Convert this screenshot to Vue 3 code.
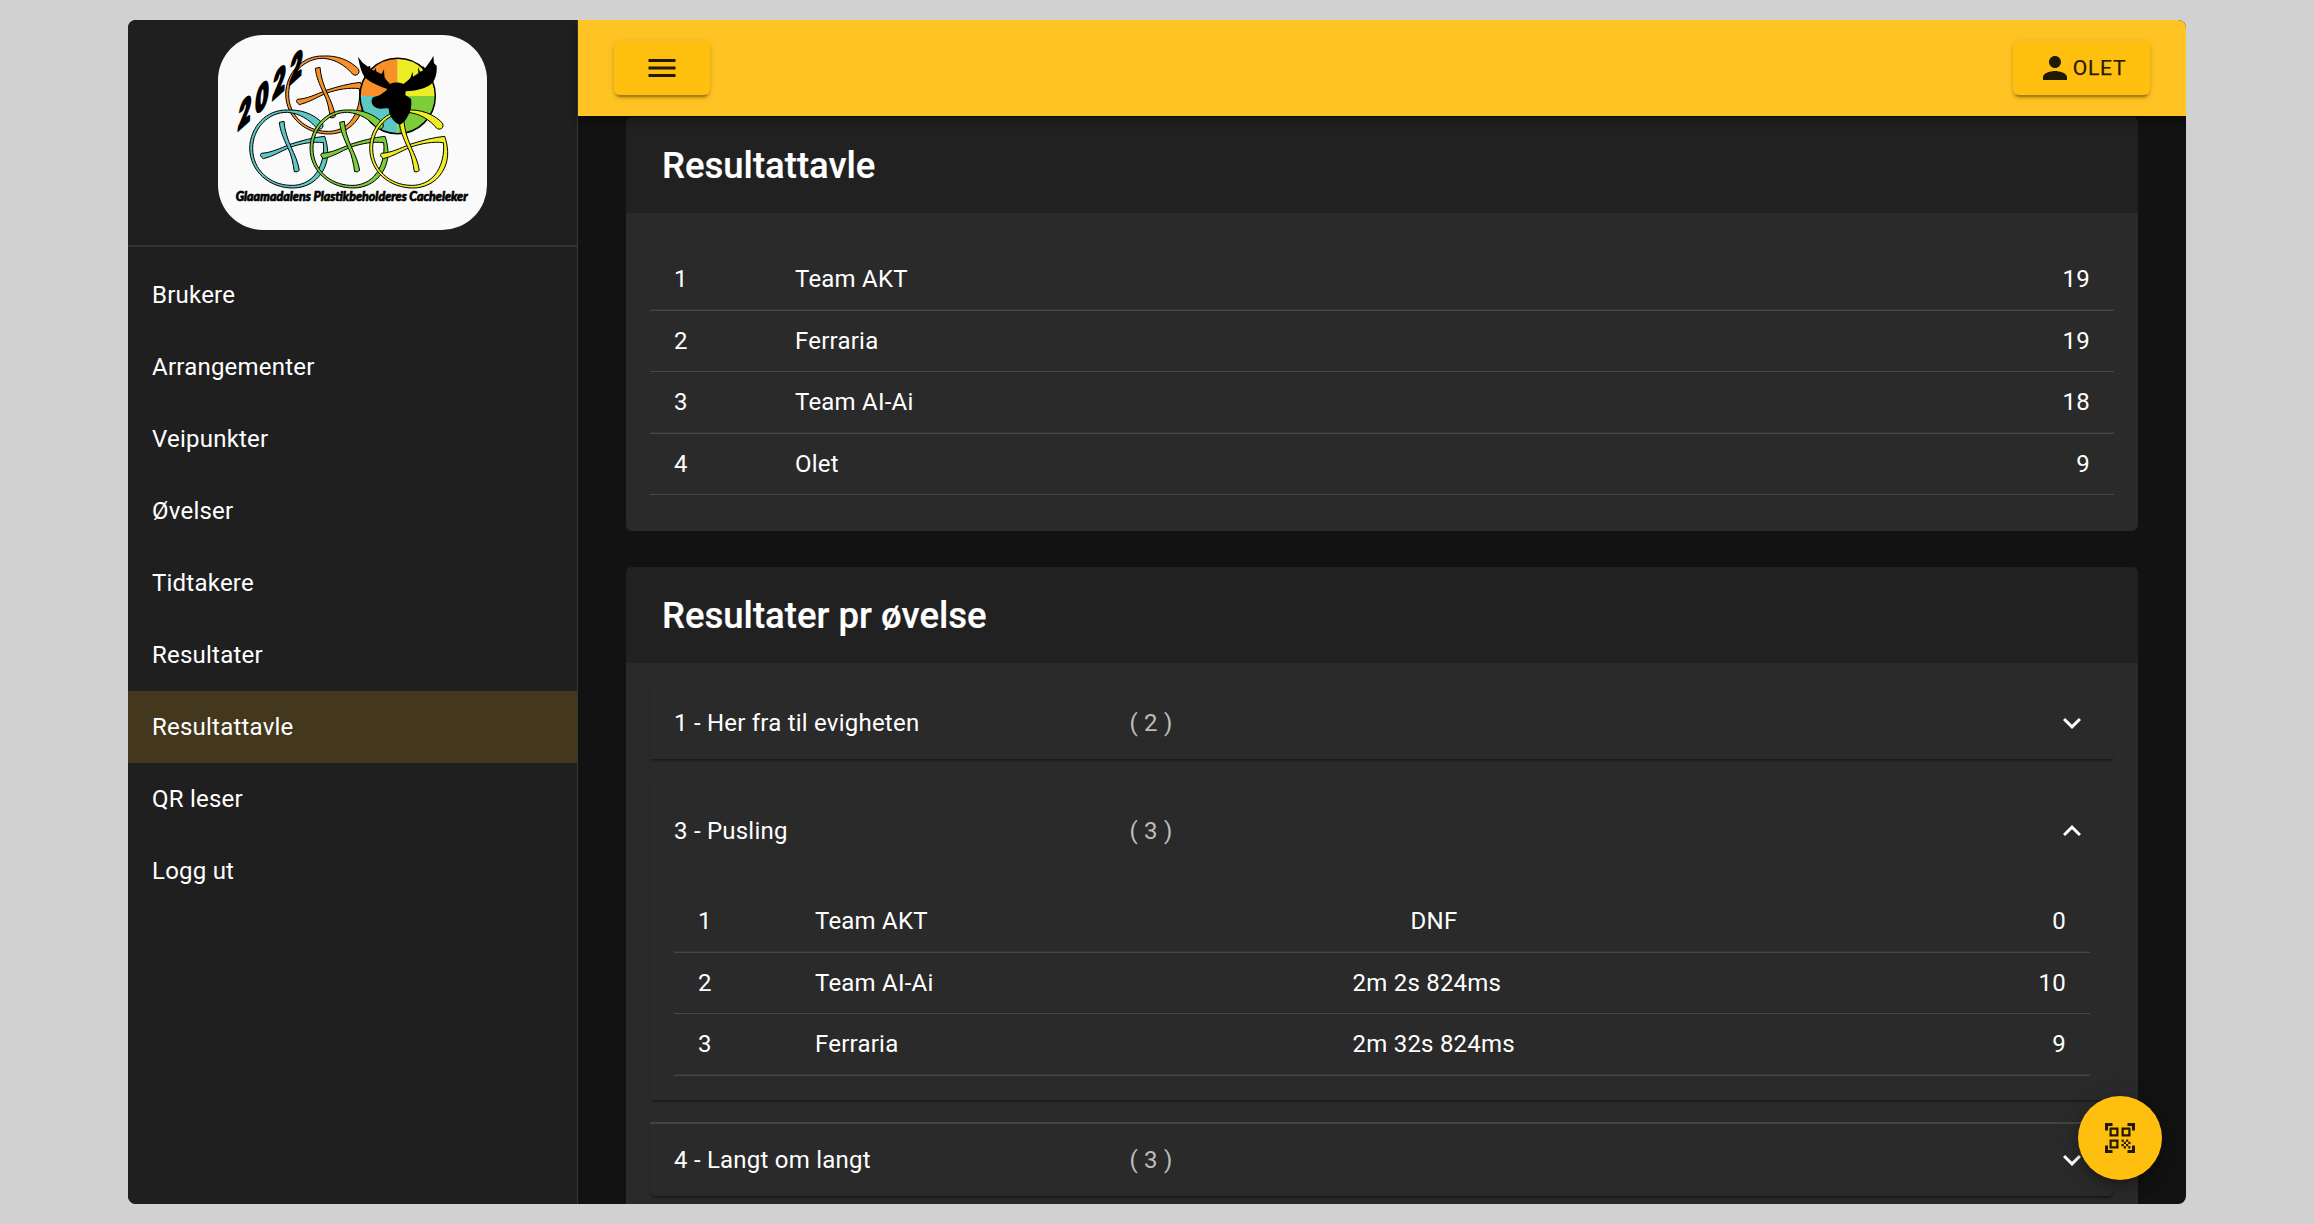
<script setup>
const menu = ['Brukere', 'Arrangementer', 'Veipunkter', 'Øvelser', 'Tidtakere', 'Resultater', 'Resultattavle', 'QR leser', 'Logg ut']
const active = 'Resultattavle'
const standings = [
  { rank: 1, name: 'Team AKT', points: 19 },
  { rank: 2, name: 'Ferraria', points: 19 },
  { rank: 3, name: 'Team AI-Ai', points: 18 },
  { rank: 4, name: 'Olet', points: 9 },
]
const exercises = [
  { title: '1 - Her fra til evigheten', count: 2, open: false, rows: [] },
  {
    title: '3 - Pusling', count: 3, open: true,
    rows: [
      { rank: 1, name: 'Team AKT', time: 'DNF', dnf: true, points: 0 },
      { rank: 2, name: 'Team AI-Ai', time: '2m 2s 824ms', points: 10 },
      { rank: 3, name: 'Ferraria', time: '2m 32s 824ms', points: 9 },
    ],
  },
  { title: '4 - Langt om langt', count: 3, open: false, divided: true, rows: [] },
]
const gCaches = [
  { color: '#5bc8c4', x: 0, y: 0 },
  { color: '#7bce3a', x: 181, y: 0 },
  { color: '#eeee22', x: 360, y: 0 },
]
const ring = 'M368 310C340 280 300 268 262 270C200 268 150 320 149 385C150 455 210 505 280 504C345 503 385 450 383 395C382 375 378 360 374 349C340 352 305 362 270 373C240 385 215 398 184 400Q177 407 190 416C220 409 240 395 270 382C305 370 340 364 370 368C374 400 366 440 342 468C318 493 290 497 270 496C210 494 158 450 158 385C158 325 205 276 262 277C300 280 328 300 346 320C352 332 374 330 368 310Z'
const arm = 'M238 307L252 304C254 330 262 355 272 378C284 405 294 425 298 451Q292 458 283 455C279 430 275 405 263 382C250 355 240 330 238 307Z'
</script>

<template>
  <div class="page">
    <div class="window">
      <aside class="sidebar">
        <div class="brand">
          <svg class="logo" viewBox="54 45 807 585">
            <g transform="translate(108 -162)" fill="#f79028" stroke="#000" stroke-width="3">
              <path :d="ring" /><path :d="arm" />
            </g>
            <g stroke="none">
              <circle cx="593" cy="228" r="113" fill="#fafafa" />
              <path d="M593 228H480A113 113 0 0 1 593 115Z" fill="#f79028" />
              <path d="M593 228V115A113 113 0 0 1 706 228Z" fill="#ecee24" />
              <path d="M593 228H706A113 113 0 0 1 593 341Z" fill="#7dcd3b" />
              <path d="M593 228V341A113 113 0 0 1 480 228Z" fill="#5bc8c4" />
              <circle cx="593" cy="228" r="113" fill="none" stroke="#000" stroke-width="4.5" />
            </g>
            <g v-for="g in gCaches" :key="g.x" :transform="`translate(${g.x} ${g.y})`" :fill="g.color" stroke="#000" stroke-width="3">
              <path :d="ring" /><path :d="arm" />
            </g>
            <path d="M474 110L488 128L504 140L510 137L512 148L523 152L526 143L530 155L545 162L552 148L553 165C553 178 562 182 570 192C585 185 600 188 610 192C625 182 628 178 632 172L638 155L639 170L655 160L654 140L660 155L668 152L668 137L675 145C685 130 695 120 700 107L702 130L710 137C712 160 705 185 690 195C670 208 645 212 617 214L616 225L633 236C636 255 632 275 625 285C618 300 610 310 600 314C590 312 575 300 568 280L566 266C552 262 545 270 530 264C515 258 512 245 517 235C522 228 530 230 540 225C550 218 560 212 562 207C540 200 515 190 497 175C483 160 478 130 474 110Z" />
            <text class="year" transform="translate(115 330) skewY(-41.7) scale(.66 1)" x="0 78 156 234" y="0">2022</text>
            <text class="motto" x="107" y="543" textLength="696" lengthAdjust="spacingAndGlyphs">Glaamadalens Plastikbeholderes Cacheleker</text>
          </svg>
        </div>
        <nav class="menu">
          <a v-for="item in menu" :key="item" class="menu-item" :class="{ active: item === active }">{{ item }}</a>
        </nav>
      </aside>

      <div class="content">
        <header class="appbar">
          <button class="btn menu-btn">
            <svg class="icon" viewBox="0 0 24 24"><path d="M3 18h18v-2H3v2zm0-5h18v-2H3v2zm0-7v2h18V6H3z" /></svg>
          </button>
          <button class="btn user-btn">
            <svg class="icon" viewBox="0 0 24 24"><path d="M12 12c2.21 0 4-1.79 4-4s-1.79-4-4-4-4 1.79-4 4 1.79 4 4 4zm0 2c-2.67 0-8 1.34-8 4v2h16v-2c0-2.66-5.33-4-8-4z" /></svg>OLET
          </button>
        </header>

        <main class="main">
          <section class="card">
            <h2 class="card-title">Resultattavle</h2>
            <div class="card-body board">
              <div v-for="r in standings" :key="r.rank" class="row">
                <span class="rank">{{ r.rank }}</span>
                <span class="name">{{ r.name }}</span>
                <span class="points">{{ r.points }}</span>
              </div>
            </div>
          </section>

          <section class="card">
            <h2 class="card-title">Resultater pr øvelse</h2>
            <div class="card-body">
              <div v-for="e in exercises" :key="e.title" class="accordion" :class="{ open: e.open, divided: e.divided }">
                <div class="summary">
                  <span class="summary-title">{{ e.title }}</span>
                  <span class="summary-count">( {{ e.count }} )</span>
                  <svg class="icon chevron" viewBox="0 0 24 24"><path d="M16.59 8.59 12 13.17 7.41 8.59 6 10l6 6 6-6z" /></svg>
                </div>
                <div v-if="e.open" class="details">
                  <div v-for="r in e.rows" :key="r.rank" class="row">
                    <span class="rank">{{ r.rank }}</span>
                    <span class="name">{{ r.name }}</span>
                    <span class="time" :class="{ dnf: r.dnf }">{{ r.time }}</span>
                    <span class="points">{{ r.points }}</span>
                  </div>
                </div>
              </div>
            </div>
          </section>
        </main>

        <button class="fab">
          <svg class="icon" viewBox="0 0 24 24"><path d="M9.5 6.5v3h-3v-3h3M11 5H5v6h6V5zm-1.5 9.5v3h-3v-3h3M11 13H5v6h6v-6zm6.5-6.5v3h-3v-3h3M19 5h-6v6h6V5zm-6 8h1.5v1.5H13V13zm1.5 1.5H16V16h-1.5v-1.5zM16 13h1.5v1.5H16V13zm-3 3h1.5v1.5H13V16zm1.5 1.5H16V19h-1.5v-1.5zM16 16h1.5v1.5H16V16zm1.5-1.5H19V16h-1.5v-1.5zm0 3H19V19h-1.5v-1.5zM22 7h-2V4h-3V2h5v5zm0 15v-5h-2v3h-3v2h5zM2 22h5v-2H4v-3H2v5zM2 2v5h2V4h3V2H2z" /></svg>
        </button>
      </div>
    </div>
  </div>
</template>

<style>
body { background: #d1d1d1; }
</style>

<style scoped>
.page {
  box-sizing: border-box;
  width: 2314px;
  height: 1224px;
  padding: 20px 128px;
  background: #d1d1d1;
  font-family: Roboto, sans-serif;
  font-size: 24px;
  line-height: 36px;
  letter-spacing: 0.225px;
  color: #fff;
}
.window {
  display: flex;
  height: 1184px;
  background: #121212;
  border-radius: 8px;
  overflow: hidden;
}
.sidebar {
  box-sizing: border-box;
  width: 450px;
  flex: none;
  background: #1f1f1f;
  border-right: 1px solid #373737;
}
.brand {
  box-sizing: border-box;
  height: 227px;
  padding-top: 15px;
  padding-left: 90px;
  border-bottom: 2px solid #333;
}
.logo {
  display: block;
  width: 269px;
  height: 195px;
  border-radius: 45px;
  background: #fafafa;
  overflow: visible;
}
.year {
  font: italic 900 100px Lato, sans-serif;
  letter-spacing: 0;
  stroke: #000;
  stroke-width: 10px;
}
.motto {
  font: italic 900 42px Lato, sans-serif;
  letter-spacing: 0;
  stroke: #000;
  stroke-width: 2.2px;
}
.menu {
  padding: 12px 0;
}
.menu-item {
  display: block;
  padding: 18px 24px;
}
.menu-item.active {
  background: #43381e;
}
.content {
  position: relative;
  flex: 1;
  display: flex;
  flex-direction: column;
  min-width: 0;
}
.appbar {
  position: relative;
  z-index: 1;
  box-sizing: border-box;
  flex: none;
  height: 96px;
  padding: 0 36px;
  display: flex;
  align-items: center;
  justify-content: space-between;
  background: #ffc424;
  box-shadow: 0 3px 6px -1.5px rgba(0, 0, 0, .2), 0 6px 7.5px rgba(0, 0, 0, .14), 0 1.5px 15px rgba(0, 0, 0, .12);
}
.btn {
  display: flex;
  align-items: center;
  justify-content: center;
  height: 54px;
  padding: 0;
  border: 0;
  border-radius: 6px;
  background: #ffbf0e;
  color: rgba(0, 0, 0, .87);
  font: 400 21px/36px Roboto, sans-serif;
  letter-spacing: .8px;
  -webkit-text-stroke: .25px #211900;
  box-shadow: 0 4.5px 1.5px -3px rgba(0, 0, 0, .2), 0 3px 3px rgba(0, 0, 0, .14), 0 1.5px 7.5px rgba(0, 0, 0, .12);
}
.menu-btn { width: 96px; }
.user-btn { width: 137px; }
.icon {
  width: 36px;
  height: 36px;
  flex: none;
  fill: currentColor;
}
.main {
  flex: 1;
  min-height: 0;
  padding: 1px 48px 0;
  overflow: hidden;
}
.card {
  margin-bottom: 36px;
  border-radius: 6px;
  background: #2a2a2a;
  overflow: hidden;
}
.card-title {
  margin: 0;
  padding: 25px 36px 23px;
  background: #212121;
  font-size: 36.5px;
  line-height: 48px;
  font-weight: 500;
  letter-spacing: 0;
  -webkit-text-stroke: .2px #fff;
}
.card-body {
  padding: 24px;
}
.board {
  padding: 36px 24px;
}
.row {
  box-sizing: border-box;
  display: flex;
  align-items: center;
  height: 61.5px;
  padding: 0 24px;
  border-bottom: 1px solid #474747;
}
.row:nth-child(odd) {
  box-shadow: inset 0 -1px #343434;
}
.rank { width: 121px; }
.name { flex: 1; }
.points { text-align: right; }
.accordion {
  margin-bottom: 24px;
  background: #2a2a2a;
  box-shadow: 0 3px 1.5px -1.5px rgba(0, 0, 0, .2), 0 1.5px 1.5px rgba(0, 0, 0, .14), 0 1.5px 3px rgba(0, 0, 0, .06);
}
.accordion.divided {
  border-top: 2px solid #434343;
  margin-top: -2px;
  border-radius: 0 0 6px 6px;
}
.summary {
  display: flex;
  align-items: center;
  height: 72px;
  padding: 0 24px;
}
.open .summary { height: 96px; }
.summary-title { width: 455.5px; }
.summary-count {
  flex: 1;
  color: rgba(255, 255, 255, .7);
}
.open .chevron { transform: rotate(180deg); }
.details { padding: 12px 24px 24px; }
.details .rank { width: 117px; }
.details .name { flex: none; width: 537.5px; }
.time { width: 163px; }
.time.dnf { text-align: center; }
.details .points { flex: 1; }
.fab {
  position: absolute;
  right: 24px;
  bottom: 24px;
  z-index: 2;
  display: flex;
  align-items: center;
  justify-content: center;
  width: 84px;
  height: 84px;
  padding: 0;
  border: 0;
  border-radius: 50%;
  background: #ffbf0e;
  color: rgba(0, 0, 0, .87);
  box-shadow: 0 4.5px 7.5px -1.5px rgba(0, 0, 0, .2), 0 9px 15px rgba(0, 0, 0, .14), 0 1.5px 27px rgba(0, 0, 0, .12);
}
</style>
